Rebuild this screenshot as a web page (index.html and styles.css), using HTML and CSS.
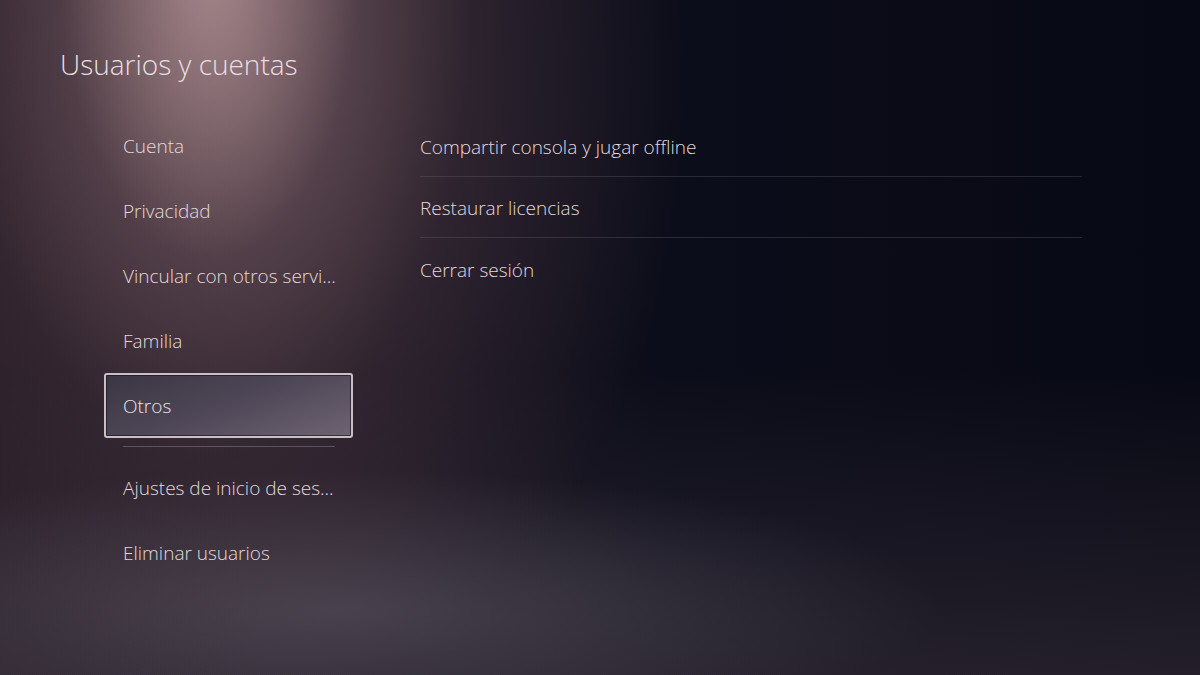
FILE: index.html
```html
<!DOCTYPE html>
<html lang="es">
<head>
<meta charset="utf-8">
<title>Usuarios y cuentas</title>
<link rel="stylesheet" href="styles.css">
</head>
<body>
<div class="screen">
  <h1 class="title">Usuarios y cuentas</h1>
  <div class="content">
    <nav class="side">
      <div class="side-item">Cuenta</div>
      <div class="side-item">Privacidad</div>
      <div class="side-item">Vincular con otros servi...</div>
      <div class="side-item">Familia</div>
      <div class="side-item selected">Otros</div>
      <div class="side-rule"></div>
      <div class="side-item">Ajustes de inicio de ses...</div>
      <div class="side-item">Eliminar usuarios</div>
    </nav>
    <div class="detail">
      <div class="row">Compartir consola y jugar offline</div>
      <div class="row">Restaurar licencias</div>
      <div class="row">Cerrar sesión</div>
    </div>
  </div>
</div>
</body>
</html>
```
FILE: styles.css
```css
html, body {
  margin: 0;
  padding: 0;
  background: #0a0c18;
}
.screen {
  width: 1200px;
  height: 675px;
  overflow: hidden;
  font-family: "Open Sans", "Noto Sans", sans-serif;
  font-weight: 300;
  color: #e2d9dd;
  background:
    radial-gradient(ellipse 150px 300px at 210px -40px, rgba(215,180,180,0.5), rgba(215,180,180,0) 100%),
    radial-gradient(ellipse 260px 480px at 215px -20px, rgba(170,135,140,0.45), rgba(170,135,140,0) 100%),
    radial-gradient(ellipse 460px 620px at 230px 80px, rgba(110,82,92,0.55), rgba(110,82,92,0) 100%),
    radial-gradient(ellipse 600px 140px at 340px 610px, rgba(100,96,108,0.5), rgba(100,96,108,0) 100%),
    linear-gradient(to bottom, rgba(58,48,60,0) 55%, rgba(58,48,60,0.55) 100%),
    linear-gradient(to right, #211822 0, #1b1520 30%, #0c0d1a 55%, #070914 100%);
}
.title {
  margin: 0;
  padding: 46px 0 0 60px;
  height: 67px;
  box-sizing: border-box;
  font-size: 28px;
  font-weight: 300;
  line-height: 36px;
  color: #e8dfe2;
}
.content {
  display: flex;
  padding-top: 46px;
}
.side {
  width: 249px;
  margin-left: 104px;
  display: flex;
  flex-direction: column;
}
.side-item {
  height: 65px;
  display: flex;
  align-items: center;
  padding-left: 19px;
  font-size: 19px;
  box-sizing: border-box;
  white-space: nowrap;
}
.side-item.selected {
  border: 2px solid #cbbfc6;
  border-radius: 3px;
  padding-left: 17px;
  background: linear-gradient(160deg, #3b3643 0%, #4c4555 45%, #6e6372 100%);
  box-shadow: inset 0 0 0 1px rgba(20,16,24,0.6);
  color: #ece4e8;
}
.side-rule {
  height: 1px;
  margin: 8px 18px 8px 19px;
  background: rgba(150,140,150,0.45);
}
.detail {
  margin-left: 67px;
  margin-top: 3px;
  width: 662px;
  display: flex;
  flex-direction: column;
}
.row {
  height: 61px;
  display: flex;
  align-items: center;
  font-size: 19px;
  border-bottom: 1px solid rgba(120,115,130,0.28);
  box-sizing: border-box;
  padding-top: 2px;
}
.row:last-child {
  border-bottom: none;
}
```
